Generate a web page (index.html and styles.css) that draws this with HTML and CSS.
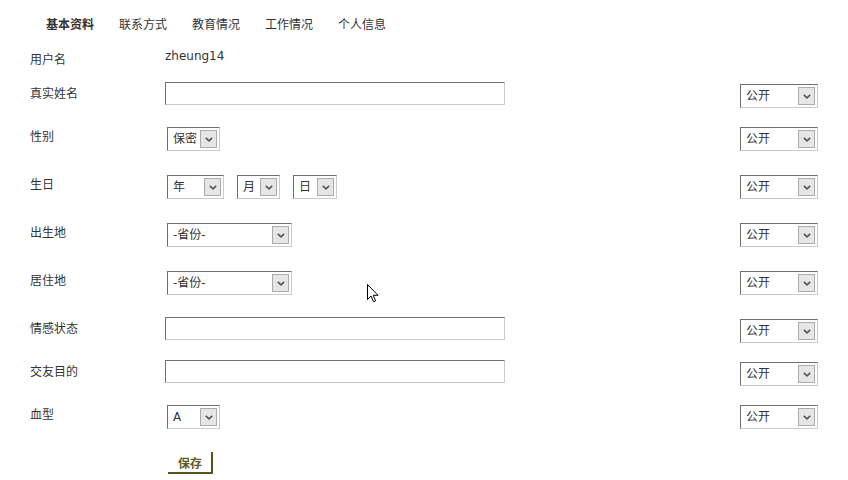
FILE: index.html
```html
<!DOCTYPE html>
<html lang="zh">
<head>
<meta charset="utf-8">
<title>基本资料</title>
<link rel="stylesheet" href="styles.css">
</head>
<body>
<div class="page">
  <nav class="tabs">
    <span class="tab tab-active">基本资料</span>
    <span class="tab">联系方式</span>
    <span class="tab">教育情况</span>
    <span class="tab">工作情况</span>
    <span class="tab">个人信息</span>
  </nav>

  <form class="form">
    <div class="row row-user">
      <div class="label">用户名</div>
      <div class="field"><span class="username">zheung14</span></div>
      <div class="privacy"></div>
    </div>

    <div class="row row-input">
      <div class="label">真实姓名</div>
      <div class="field"><div class="text-input"></div></div>
      <div class="privacy"><div class="select w-public"><span class="select-text">公开</span><span class="select-btn"><svg viewBox="0 0 8 5" width="8" height="5"><path d="M0.8 0.8 L4 3.8 L7.2 0.8" fill="none" stroke="#555" stroke-width="1.6"/></svg></span></div></div>
    </div>

    <div class="row">
      <div class="label">性别</div>
      <div class="field"><div class="select w-small"><span class="select-text">保密</span><span class="select-btn"><svg viewBox="0 0 8 5" width="8" height="5"><path d="M0.8 0.8 L4 3.8 L7.2 0.8" fill="none" stroke="#555" stroke-width="1.6"/></svg></span></div></div>
      <div class="privacy"><div class="select w-public"><span class="select-text">公开</span><span class="select-btn"><svg viewBox="0 0 8 5" width="8" height="5"><path d="M0.8 0.8 L4 3.8 L7.2 0.8" fill="none" stroke="#555" stroke-width="1.6"/></svg></span></div></div>
    </div>

    <div class="row">
      <div class="label">生日</div>
      <div class="field date-group">
        <div class="select w-year"><span class="select-text">年</span><span class="select-btn"><svg viewBox="0 0 8 5" width="8" height="5"><path d="M0.8 0.8 L4 3.8 L7.2 0.8" fill="none" stroke="#555" stroke-width="1.6"/></svg></span></div>
        <div class="select w-month"><span class="select-text">月</span><span class="select-btn"><svg viewBox="0 0 8 5" width="8" height="5"><path d="M0.8 0.8 L4 3.8 L7.2 0.8" fill="none" stroke="#555" stroke-width="1.6"/></svg></span></div>
        <div class="select w-day"><span class="select-text">日</span><span class="select-btn"><svg viewBox="0 0 8 5" width="8" height="5"><path d="M0.8 0.8 L4 3.8 L7.2 0.8" fill="none" stroke="#555" stroke-width="1.6"/></svg></span></div>
      </div>
      <div class="privacy"><div class="select w-public"><span class="select-text">公开</span><span class="select-btn"><svg viewBox="0 0 8 5" width="8" height="5"><path d="M0.8 0.8 L4 3.8 L7.2 0.8" fill="none" stroke="#555" stroke-width="1.6"/></svg></span></div></div>
    </div>

    <div class="row">
      <div class="label">出生地</div>
      <div class="field"><div class="select w-province"><span class="select-text">-省份-</span><span class="select-btn"><svg viewBox="0 0 8 5" width="8" height="5"><path d="M0.8 0.8 L4 3.8 L7.2 0.8" fill="none" stroke="#555" stroke-width="1.6"/></svg></span></div></div>
      <div class="privacy"><div class="select w-public"><span class="select-text">公开</span><span class="select-btn"><svg viewBox="0 0 8 5" width="8" height="5"><path d="M0.8 0.8 L4 3.8 L7.2 0.8" fill="none" stroke="#555" stroke-width="1.6"/></svg></span></div></div>
    </div>

    <div class="row">
      <div class="label">居住地</div>
      <div class="field"><div class="select w-province"><span class="select-text">-省份-</span><span class="select-btn"><svg viewBox="0 0 8 5" width="8" height="5"><path d="M0.8 0.8 L4 3.8 L7.2 0.8" fill="none" stroke="#555" stroke-width="1.6"/></svg></span></div></div>
      <div class="privacy"><div class="select w-public"><span class="select-text">公开</span><span class="select-btn"><svg viewBox="0 0 8 5" width="8" height="5"><path d="M0.8 0.8 L4 3.8 L7.2 0.8" fill="none" stroke="#555" stroke-width="1.6"/></svg></span></div></div>
    </div>

    <div class="row row-input">
      <div class="label">情感状态</div>
      <div class="field"><div class="text-input"></div></div>
      <div class="privacy"><div class="select w-public"><span class="select-text">公开</span><span class="select-btn"><svg viewBox="0 0 8 5" width="8" height="5"><path d="M0.8 0.8 L4 3.8 L7.2 0.8" fill="none" stroke="#555" stroke-width="1.6"/></svg></span></div></div>
    </div>

    <div class="row row-input">
      <div class="label">交友目的</div>
      <div class="field"><div class="text-input"></div></div>
      <div class="privacy"><div class="select w-public"><span class="select-text">公开</span><span class="select-btn"><svg viewBox="0 0 8 5" width="8" height="5"><path d="M0.8 0.8 L4 3.8 L7.2 0.8" fill="none" stroke="#555" stroke-width="1.6"/></svg></span></div></div>
    </div>

    <div class="row row-last">
      <div class="label">血型</div>
      <div class="field"><div class="select w-small"><span class="select-text">A</span><span class="select-btn"><svg viewBox="0 0 8 5" width="8" height="5"><path d="M0.8 0.8 L4 3.8 L7.2 0.8" fill="none" stroke="#555" stroke-width="1.6"/></svg></span></div></div>
      <div class="privacy"><div class="select w-public"><span class="select-text">公开</span><span class="select-btn"><svg viewBox="0 0 8 5" width="8" height="5"><path d="M0.8 0.8 L4 3.8 L7.2 0.8" fill="none" stroke="#555" stroke-width="1.6"/></svg></span></div></div>
    </div>

    <div class="actions">
      <span class="save-btn">保存</span>
    </div>
  </form>

  <svg class="cursor" viewBox="0 0 12 19" width="12" height="19"><path d="M0.5 0.5 L0.5 15.5 L4 12 L6.5 17.8 L8.6 16.9 L6.2 11.3 L11 11.3 Z" fill="#fff" stroke="#000" stroke-width="1" stroke-linejoin="miter"/></svg>
</div>
</body>
</html>
```

FILE: styles.css
```css
html, body {
  margin: 0;
  padding: 0;
  background: #ffffff;
}

body {
  font-family: "DejaVu Sans", "Noto Sans CJK SC", sans-serif;
  font-size: 12px;
  color: #333333;
}

.page {
  position: relative;
  width: 848px;
  height: 480px;
  overflow: hidden;
}

.tabs {
  display: flex;
  gap: 25px;
  height: 50px;
  box-sizing: border-box;
  padding: 15px 0 0 46px;
  line-height: 18px;
}

.tab {
  color: #333333;
  font-family: "Noto Sans CJK SC", sans-serif;
}

.tab-active {
  font-weight: bold;
}

.form {
  display: flex;
  flex-direction: column;
}

.row {
  display: grid;
  grid-template-columns: 135px 1fr 78px;
  padding: 0 30px;
  height: 48px;
  align-items: start;
}

.row-user {
  height: 34px;
}

.row-input {
  height: 43px;
}

.row-last {
  height: 47px;
}

.label {
  line-height: 18px;
  font-family: "Noto Sans CJK SC", sans-serif;
  color: #333333;
}

.field {
  display: flex;
  align-items: flex-start;
}

.username {
  line-height: 18px;
  margin-top: -3px;
  color: #333333;
}

.row-input .field {
  margin-top: -2px;
}

.text-input {
  width: 340px;
  height: 23px;
  box-sizing: border-box;
  border-style: solid;
  border-width: 1px;
  border-color: #6e6e6e #cbcbcb #cbcbcb #6e6e6e;
  background: #ffffff;
}

.row-input .privacy {
  margin-top: 0;
}

.date-group {
  gap: 13px;
}

.select {
  display: flex;
  align-items: flex-start;
  justify-content: space-between;
  height: 24px;
  box-sizing: border-box;
  border-style: solid;
  border-width: 1px;
  border-color: #6e6e6e #cbcbcb #cbcbcb #6e6e6e;
  background: #ffffff;
  padding: 2px 2px 2px 5px;
}

.field .select {
  margin-left: 2px;
}

.date-group .select {
  margin-left: 0;
}

.date-group .select:first-child {
  margin-left: 2px;
}

.select-text {
  line-height: 18px;
  color: #333333;
  font-family: "DejaVu Sans", "Noto Sans CJK SC", sans-serif;
}

.select-btn {
  display: flex;
  align-items: center;
  justify-content: center;
  width: 17px;
  height: 18px;
  box-sizing: border-box;
  border: 1px solid #ababab;
  background: #e6e6e6;
}

.w-public { width: 78px; }
.w-small { width: 53px; }
.w-year { width: 57px; }
.w-month { width: 43px; }
.w-day { width: 44px; }
.w-province { width: 125px; }

.actions {
  padding-left: 168px;
}

.save-btn {
  display: inline-block;
  width: 45px;
  height: 22px;
  box-sizing: border-box;
  border-right: 2px solid #55551c;
  border-bottom: 2px solid #55551c;
  text-align: center;
  line-height: 21px;
  font-weight: bold;
  color: #5c5c2a;
  font-family: "Noto Sans CJK SC", sans-serif;
  padding-left: 1px;
}

.cursor {
  position: absolute;
  left: 367px;
  top: 284px;
}
```
